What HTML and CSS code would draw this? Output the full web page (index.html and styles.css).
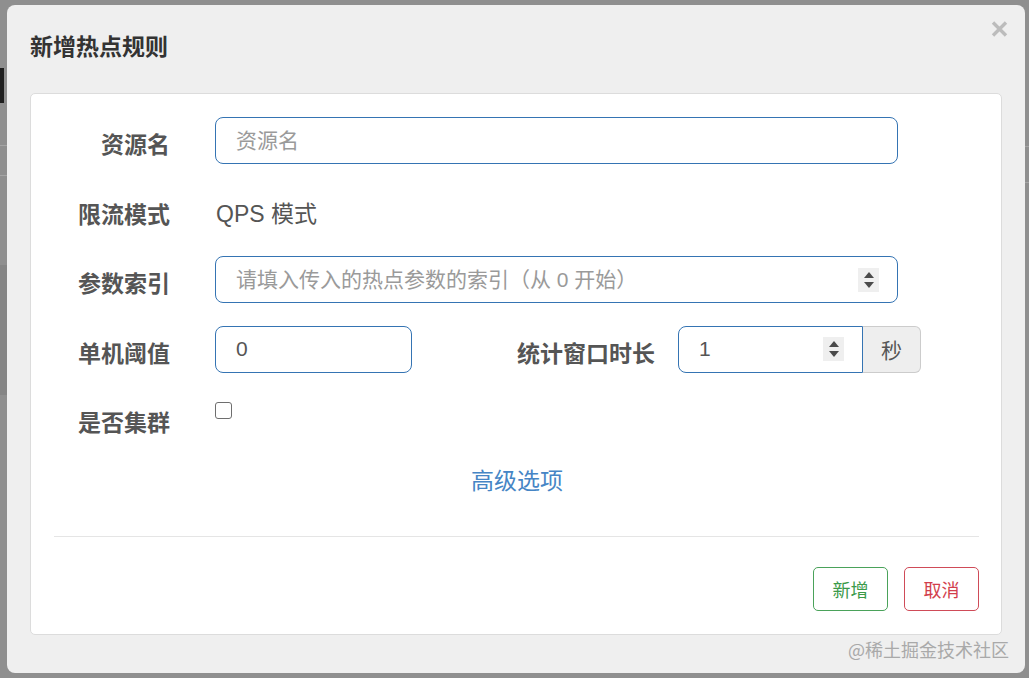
FILE: index.html
```html
<!DOCTYPE html>
<html lang="zh-CN">
<head>
<meta charset="utf-8">
<title>新增热点规则</title>
<link rel="stylesheet" href="styles.css">
</head>
<body>
<div class="backdrop-page">
  <span class="frag frag-bar"></span>
  <span class="frag frag-line1"></span>
  <span class="frag frag-line2"></span>
  <span class="frag frag-block"></span>
  <span class="frag frag-rline1"></span>
  <span class="frag frag-rline2"></span>
</div>
<div class="dialog">
  <div class="dialog-header">
    <h4 class="dialog-title">新增热点规则</h4>
    <span class="close" aria-label="关闭">
      <svg width="17" height="16" viewBox="0 0 17 16"><path d="M2 1.5 L15 14.5 M15 1.5 L2 14.5" stroke="#bcbcbc" stroke-width="3.4" stroke-linecap="butt"/></svg>
    </span>
  </div>
  <div class="card">
    <div class="form-grid">
      <label class="label">资源名</label>
      <div class="control"><div class="field wide"><input class="field-input" type="text" placeholder="资源名"></div></div>

      <label class="label">限流模式</label>
      <div class="control"><span class="static">QPS 模式</span></div>

      <label class="label">参数索引</label>
      <div class="control"><div class="field wide"><input class="field-input" type="text" placeholder="请填入传入的热点参数的索引（从 0 开始）"><span class="spinner"><i class="up"></i><i class="down"></i></span></div></div>

      <label class="label">单机阈值</label>
      <div class="control row-split">
        <div class="field small"><input class="field-input" type="text" value="0"></div>
        <label class="label inline-label">统计窗口时长</label>
        <div class="input-group">
          <div class="field grouped"><input class="field-input" type="text" value="1"><span class="spinner"><i class="up"></i><i class="down"></i></span></div>
          <span class="addon">秒</span>
        </div>
      </div>

      <label class="label">是否集群</label>
      <div class="control"><input class="checkbox" type="checkbox"></div>
    </div>
    <div class="advanced"><a class="link" href="#">高级选项</a></div>
    <div class="card-footer">
      <button class="btn btn-success">新增</button>
      <button class="btn btn-danger">取消</button>
    </div>
  </div>
  <span class="watermark">@稀土掘金技术社区</span>
</div>
</body>
</html>
```
FILE: styles.css
```css
* { box-sizing: border-box; }
html, body { margin: 0; height: 100%; }
body {
  background: #8f8f8f;
  font-family: "Liberation Sans", "Noto Sans CJK SC", sans-serif;
  padding: 5px 4px 5px 7px;
  position: relative;
  overflow: hidden;
}
.backdrop-page { position: absolute; inset: 0; pointer-events: none; }
.frag { position: absolute; display: block; }
.frag-bar { left: 0; top: 68px; width: 4px; height: 35px; background: #1e1e1e; }
.frag-line1 { left: 0; top: 145px; width: 7px; height: 1px; background: #a5a5a5; }
.frag-line2 { left: 0; top: 175px; width: 7px; height: 1px; background: #a5a5a5; }
.frag-block { left: 0; top: 265px; width: 7px; height: 130px; background: #858585; }
.frag-rline1 { right: 0; top: 146px; width: 4px; height: 1px; background: #a5a5a5; }
.frag-rline2 { right: 0; top: 182px; width: 4px; height: 1px; background: #a5a5a5; }

.dialog {
  position: relative;
  width: 1018px;
  height: 668px;
  background: #efefef;
  border-radius: 8px;
  padding: 24px 23px 38px 23px;
  display: flex;
  flex-direction: column;
}
.dialog-header {
  display: flex;
  align-items: flex-start;
  justify-content: space-between;
  height: 64px;
}
.dialog-title {
  margin: 0;
  font-family: "Noto Sans CJK SC", sans-serif;
  font-size: 23px;
  font-weight: 700;
  line-height: 32px;
  color: #333;
}
.close {
  display: block;
  width: 17px;
  height: 16px;
  margin-top: -8px;
  margin-right: -6px;
}
.close svg { display: block; }

.card {
  flex: 1;
  background: #fff;
  border: 1px solid #dcdcdc;
  border-radius: 5px;
  padding: 23px 22px 23px 23px;
  display: flex;
  flex-direction: column;
}
.form-grid {
  display: grid;
  grid-template-columns: 116px 1fr;
  column-gap: 45px;
  row-gap: 22.5px;
  grid-auto-rows: 47px;
}
.label {
  font-family: "Noto Sans CJK SC", sans-serif;
  font-size: 23px;
  font-weight: 700;
  color: #555;
  text-align: right;
  line-height: 47px;
  padding-top: 3px;
  white-space: nowrap;
}
.control { display: flex; align-items: flex-start; }
.static {
  font-size: 23px;
  color: #555;
  line-height: 47px;
  padding-top: 4px;
  padding-left: 1px;
}
.field {
  height: 47px;
  border: 1px solid #3574b3;
  border-radius: 8px;
  background: #fff;
  display: flex;
  align-items: center;
  padding: 0 18px 0 20px;
}
.field.wide { width: 683px; }
.field.small { width: 197px; }
.field-input {
  flex: 1;
  min-width: 0;
  border: 0;
  outline: 0;
  padding: 0;
  background: transparent;
  font-family: "Liberation Sans", "Noto Sans CJK SC", sans-serif;
  font-size: 21px;
  color: #555;
}
.field-input::placeholder { color: #9a9a9a; }
.spinner {
  width: 21px;
  height: 24px;
  background: #efefef;
  display: flex;
  flex-direction: column;
  align-items: center;
  justify-content: center;
  gap: 4px;
  flex: none;
}
.spinner i { display: block; width: 0; height: 0; border-left: 5px solid transparent; border-right: 5px solid transparent; }
.spinner .up { border-bottom: 6px solid #4a4a4a; }
.spinner .down { border-top: 6px solid #4a4a4a; }

.row-split { gap: 0; }
.inline-label { width: 243px; }
.input-group { display: flex; margin-left: 23px; }
.field.grouped {
  width: 185px;
  border-radius: 8px 0 0 8px;
}
.addon {
  width: 58px;
  height: 47px;
  background: #eee;
  border: 1px solid #ccc;
  border-left: 0;
  border-radius: 0 6px 6px 0;
  font-family: "Noto Sans CJK SC", sans-serif;
  font-size: 21px;
  color: #555;
  display: flex;
  align-items: center;
  justify-content: center;
}
.checkbox {
  appearance: none;
  -webkit-appearance: none;
  width: 17px;
  height: 17px;
  margin: 7px 0 0 0;
  border: 1.5px solid #6e6e6e;
  border-radius: 3px;
  background: #fff;
}

.advanced {
  margin-top: 21px;
  text-align: center;
  line-height: 32px;
  height: 32px;
  padding-left: 1px;
}
.link {
  font-family: "Noto Sans CJK SC", sans-serif;
  font-size: 23px;
  color: #4685c5;
  text-decoration: none;
}
.card-footer {
  margin-top: auto;
  border-top: 1px solid #e5e5e5;
  padding-top: 30px;
  display: flex;
  justify-content: flex-end;
  gap: 16px;
}
.btn {
  width: 75px;
  height: 44px;
  background: #fff;
  border-radius: 5px;
  font-family: "Noto Sans CJK SC", sans-serif;
  font-size: 18px;
  padding: 0;
  cursor: pointer;
}
.btn-success { border: 1px solid #4aa25a; color: #3b9a4a; }
.btn-danger { border: 1px solid #cf4b58; color: #d23e4c; }

.watermark {
  position: absolute;
  right: 16px;
  bottom: 12px;
  font-family: "Noto Sans CJK SC", sans-serif;
  font-size: 18px;
  line-height: 24px;
  color: #a9a9a9;
}
```
